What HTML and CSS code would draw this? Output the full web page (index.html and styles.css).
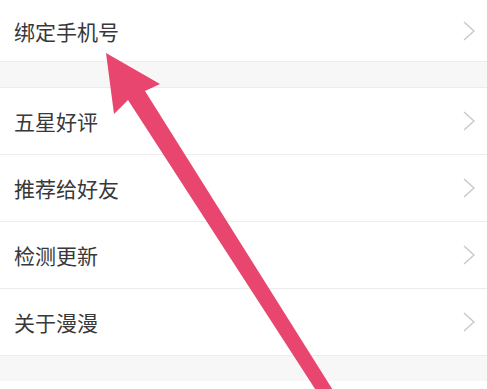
FILE: index.html
```html
<!DOCTYPE html>
<html lang="zh">
<head>
    <meta charset="UTF-8">
    <meta name="viewport" content="width=device-width, initial-scale=1.0">
    <title>设置</title>
    <link rel="stylesheet" href="styles.css">
</head>
<body>

<div class="settings">
    <!-- Konto -->
    <div class="group group-top">
        <div class="row first">
            <span class="label">绑定手机号</span>
            <svg class="chevron" viewBox="0 0 12 20"><path d="M1 1 L11 10 L1 19"/></svg>
        </div>
    </div>

    <div class="gap"></div>

    <!-- Allgemein -->
    <div class="group">
        <div class="row">
            <span class="label">五星好评</span>
            <svg class="chevron" viewBox="0 0 12 20"><path d="M1 1 L11 10 L1 19"/></svg>
        </div>
        <div class="row">
            <span class="label">推荐给好友</span>
            <svg class="chevron" viewBox="0 0 12 20"><path d="M1 1 L11 10 L1 19"/></svg>
        </div>
        <div class="row">
            <span class="label">检测更新</span>
            <svg class="chevron" viewBox="0 0 12 20"><path d="M1 1 L11 10 L1 19"/></svg>
        </div>
        <div class="row">
            <span class="label">关于漫漫</span>
            <svg class="chevron" viewBox="0 0 12 20"><path d="M1 1 L11 10 L1 19"/></svg>
        </div>
    </div>

    <div class="gap"></div>
    <div class="group bottom"></div>

    <!-- Pfeil als Markierung -->
    <svg class="arrow" viewBox="0 0 487 389">
        <polygon points="106,53 160,84 145,91 336,395 319,395 128,100 114,114"/>
    </svg>
</div>

</body>
</html>
```

FILE: styles.css
```css
/* Allgemeine Styles */
body {
    font-family: "Noto Sans CJK SC", "Noto Sans", sans-serif;
    background-color: #fff;
    color: #333;
    margin: 0;
    padding: 0;
    overflow: hidden;
}

.settings {
    position: relative;
    width: 487px;
    height: 389px;
    overflow: hidden;
}

.group {
    background-color: #fff;
    border-top: 1px solid #ececec;
    border-bottom: 1px solid #ececec;
}

.group-top {
    border-top: none;
}

.row {
    display: flex;
    align-items: center;
    justify-content: space-between;
    height: 66px;
    padding: 0 12px 0 14px;
    border-bottom: 1px solid #ececec;
}

.row:last-child {
    border-bottom: none;
}

.row.first {
    height: 61px;
}

.label {
    font-size: 21px;
    color: #383838;
}

.chevron {
    width: 12px;
    height: 20px;
    fill: none;
    stroke: #c8c8c8;
    stroke-width: 1.4;
}

/* Grauer Abstand zwischen Gruppen */
.gap {
    height: 25px;
    background-color: #f7f7f7;
}

.group.bottom {
    height: 20px;
    border-top: none;
}

/* Markierungspfeil */
.arrow {
    position: absolute;
    top: 0;
    left: 0;
    width: 487px;
    height: 389px;
    fill: #e8466f;
}
```
